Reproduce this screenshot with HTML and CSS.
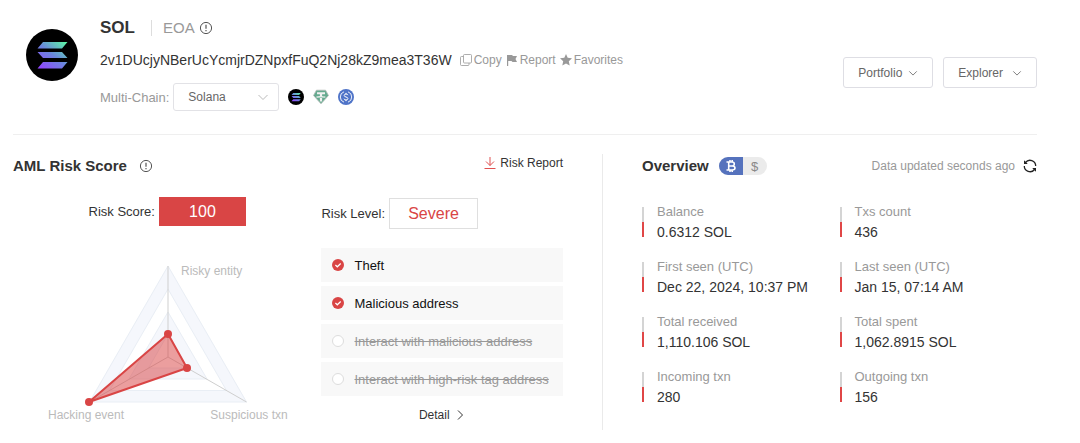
FILE: index.html
```html
<!DOCTYPE html>
<html lang="en">
<head>
<meta charset="utf-8">
<title>SOL address overview</title>
<link rel="stylesheet" href="styles.css">
</head>
<body>
<svg class="defs" aria-hidden="true">
  <defs>
    <linearGradient id="sol-gradient" gradientUnits="userSpaceOnUse" x1="16" y1="40" x2="38" y2="12">
      <stop offset="0" stop-color="#9147ff"/>
      <stop offset="0.5" stop-color="#6a86dc"/>
      <stop offset="1" stop-color="#5cf3a6"/>
    </linearGradient>
    <symbol id="solana" viewBox="0 0 52 52">
      <circle cx="26" cy="26" r="26" fill="#000"/>
      <path fill="url(#sol-gradient)" d="M17 13H41.500L36 19.500H11.500ZM11.500 23H36L41.500 29H17ZM17 33H41.500L36 39.500H11.500Z"/>
    </symbol>
    <symbol id="info" viewBox="0 0 14 14">
      <circle cx="7" cy="7" r="5.600" fill="none" stroke="currentColor"/>
      <path d="M7 3.800V7.800M7 9.100V10.200" fill="none" stroke="currentColor" stroke-width="1.200"/>
    </symbol>
    <symbol id="chevron" viewBox="0 0 12 12">
      <path d="M1.500 4L6 8.500L10.500 4" fill="none" stroke="currentColor"/>
    </symbol>
    <symbol id="checked" viewBox="0 0 12 12">
      <circle cx="6" cy="6" r="6" fill="#d94545"/>
      <path d="M3.400 6L5.300 7.800L8.700 4.500" fill="none" stroke="#fff" stroke-width="1.200"/>
    </symbol>
  </defs>
</svg>
<main class="page">
  <header class="account">
    <svg class="account-logo" role="img" aria-label="Solana"><use href="#solana"/></svg>
    <div class="account-info">
      <div class="title-row">
        <h1 class="title">SOL</h1>
        <span class="account-type">EOA</span>
        <svg class="icon info"><use href="#info"/></svg>
      </div>
      <div class="address-row">
        <span class="address">2v1DUcjyNBerUcYcmjrDZNpxfFuQ2Nj28kZ9mea3T36W</span>
        <button class="action" type="button">
          <svg class="icon-small" viewBox="0 0 12 12" fill="none" stroke="currentColor" stroke-width=".8"><rect x="3.500" y="0.500" width="8" height="8.500" rx="1"/><path d="M3.500 2.500H1.500Q.5 2.500 .5 3.500V10.500Q.5 11.500 1.500 11.500H8Q9 11.500 9 10.500V9"/></svg>Copy</button>
        <button class="action" type="button">
          <svg class="icon-small" viewBox="0 0 12 12" fill="currentColor"><path d="M1 1H6L7 2H11L9.500 5L11 8H6.500L5.500 7H2.200V12H1Z"/></svg>Report</button>
        <button class="action" type="button">
          <svg class="icon-small" viewBox="0 0 12 12" fill="currentColor"><path d="M6 0L7.700 3.800L12 4.300L8.800 7.200L9.700 11.500L6 9.400L2.300 11.500L3.200 7.200L0 4.300L4.300 3.800Z"/></svg>Favorites</button>
      </div>
      <div class="chain-row">
        <label for="chain">Multi-Chain:</label>
        <span class="select-box">
          <select id="chain"><option>Solana</option></select>
          <svg class="icon-small select-arrow"><use href="#chevron"/></svg>
        </span>
        <span class="coins">
          <svg class="coin" viewBox="0 0 52 52"><use href="#solana"/></svg>
          <svg class="coin" viewBox="0 0 16 16"><path d="M3.400 1.200H12.600L15.500 6.500L8 14.800L.5 6.500Z" fill="#65aa8f" stroke="#b5bdb9" stroke-width=".8"/><path d="M4 3.200H12V5.300H9.100V7C11 7.100 12.800 7.500 12.800 8S11 9 9.100 9.100V12.500H6.900V9.100C5 9 3.200 8.600 3.200 8S5 7.100 6.900 7V5.300H4Z" fill="#f1f1f1"/><path d="M4.500 8Q8 9 11.500 8" fill="none" stroke="#65aa8f" stroke-width=".6"/></svg>
          <svg class="coin" viewBox="0 0 16 16" fill="none" stroke="#fff"><circle cx="8" cy="8" r="8" fill="#4f74c8" stroke="none"/><path d="M6 2.800A5.500 5.500 0 0 0 6 13.200M10 2.800A5.500 5.500 0 0 1 10 13.200" stroke-width=".9"/><path d="M9.900 6.200Q9.600 5 8 5T6.200 6.500Q6.200 7.600 8 8T9.900 9.500Q9.800 11 8 11T6.100 9.700M8 3.900V5M8 11V12.100" stroke-width="1"/></svg>
        </span>
      </div>
    </div>
    <div class="menus">
      <button class="menu" type="button">Portfolio<svg class="menu-arrow"><use href="#chevron"/></svg></button>
      <button class="menu menu-wide" type="button">Explorer<svg class="menu-arrow"><use href="#chevron"/></svg></button>
    </div>
  </header>

  <div class="panels">
    <section class="risk">
      <div class="risk-score">
        <div class="panel-head">
          <h2 class="heading">AML Risk Score</h2>
          <svg class="icon info"><use href="#info"/></svg>
        </div>
        <p class="score-line">Risk Score:<strong class="score">100</strong></p>
        <svg class="radar" viewBox="0 0 280 170" role="img" aria-label="Risk radar chart">
          <g stroke="#e9eef5" stroke-width="1">
            <path fill="#f5f7fc" d="M138 6L216.500 142H59.500Z"/>
            <path fill="#fff" d="M138 29L196.500 130.500H79.500Z"/>
            <path fill="#f5f7fc" d="M138 52L177 119H99Z"/>
            <path fill="#fff" d="M138 74L157.500 108H118.500Z"/>
          </g>
          <path fill="none" stroke="#cfcfcf" d="M138 97V6M138 97L216.500 142M138 97L59.500 142"/>
          <path fill="#d94545" fill-opacity=".52" stroke="#d94545" stroke-width="2" stroke-linejoin="round" d="M138 74L157 108L59 142Z"/>
          <g fill="#d94545"><circle cx="138" cy="74" r="4"/><circle cx="157" cy="108" r="4"/><circle cx="59" cy="142" r="4"/></g>
          <g class="radar-label"><text x="151" y="15">Risky entity</text><text x="56" y="159" text-anchor="middle">Hacking event</text><text x="219" y="159" text-anchor="middle">Suspicious txn</text></g>
        </svg>
      </div>
      <div class="risk-level">
        <a class="report-link" href="#report">
          <svg class="icon-small report-icon" viewBox="0 0 12 12" fill="none" stroke="currentColor"><path d="M6 0V8.500M2 4.500L6 8.500L10 4.500M.5 11.500H11.500"/></svg>Risk Report</a>
        <p class="level-line">Risk Level:<strong class="level">Severe</strong></p>
        <ul class="checks">
          <li class="check"><svg class="icon-small"><use href="#checked"/></svg>Theft</li>
          <li class="check"><svg class="icon-small"><use href="#checked"/></svg>Malicious address</li>
          <li class="check check-off"><span class="ring"></span><s>Interact with malicious address</s></li>
          <li class="check check-off"><span class="ring"></span><s>Interact with high-risk tag address</s></li>
        </ul>
        <a class="detail" href="#detail">Detail<svg class="icon-small detail-arrow"><use href="#chevron"/></svg></a>
      </div>
    </section>

    <section class="overview">
      <div class="overview-head">
        <h2 class="heading">Overview</h2>
        <div class="currency">
          <button class="unit unit-on" type="button" aria-label="Show in coins"><svg class="icon-small" viewBox="0 0 12 12" fill="none" stroke="currentColor" stroke-width="1.600"><path d="M1.500 2H7Q9.300 2 9.300 4T7 6H3.500M7 6Q10 6 10 8T7 10H1.500M3.700 2V10M5 0V2M7.200 0V2M5 10V12M7.200 10V12"/></svg></button>
          <button class="unit" type="button">$</button>
        </div>
        <span class="updated">Data updated seconds ago</span>
        <button class="refresh" type="button" aria-label="Refresh">
          <svg class="icon" viewBox="0 0 14 14" fill="none" stroke="currentColor" stroke-width="1.300"><path d="M2.500 3.500A5.700 5.700 0 0 1 12.700 7M11.500 10.500A5.700 5.700 0 0 1 1.300 7"/><path fill="currentColor" stroke="none" d="M1 1.300V5H4.800ZM13 12.700V9H9.200Z"/></svg>
        </button>
      </div>
      <dl class="stats">
        <div class="stat"><dt>Balance</dt><dd>0.6312 SOL</dd></div>
        <div class="stat"><dt>Txs count</dt><dd>436</dd></div>
        <div class="stat"><dt>First seen (UTC)</dt><dd>Dec 22, 2024, 10:37 PM</dd></div>
        <div class="stat"><dt>Last seen (UTC)</dt><dd>Jan 15, 07:14 AM</dd></div>
        <div class="stat"><dt>Total received</dt><dd>1,110.106 SOL</dd></div>
        <div class="stat"><dt>Total spent</dt><dd>1,062.8915 SOL</dd></div>
        <div class="stat"><dt>Incoming txn</dt><dd>280</dd></div>
        <div class="stat"><dt>Outgoing txn</dt><dd>156</dd></div>
      </dl>
    </section>
  </div>
</main>
</body>
</html>
```
FILE: styles.css
```css
* { box-sizing: border-box; }
body { margin: 0; background: #fff; color: #333; font-family: "Liberation Sans", Arial, sans-serif; font-size: 13px; }
h1, h2, p, ul, dl, dd { margin: 0; padding: 0; }
button, select { font: inherit; color: inherit; }
button { border: 0; padding: 0; background: none; cursor: pointer; }
a { color: inherit; text-decoration: none; }
svg { flex: none; }
.defs { position: absolute; width: 0; height: 0; }
.page { padding: 16px 43px 12px 13px; }
.icon { width: 14px; height: 14px; }
.icon-small { width: 12px; height: 12px; }
.info { color: #555; }

.account { display: flex; align-items: flex-start; padding: 0 0 23px 13px; border-bottom: 1px solid #efefef; }
.account-logo { width: 52px; height: 52px; margin: 13px 22px 0 0; }
.title-row { display: flex; align-items: center; height: 24px; }
.title { font-size: 17px; line-height: 24px; }
.account-type { margin: 0 4px 0 16px; padding-left: 11px; border-left: 1px solid #ddd; color: #999; font-size: 15px; line-height: 16px; }
.address-row { display: flex; align-items: center; height: 24px; margin-top: 8px; }
.address { margin-right: 8px; font-size: 14px; }
.action { display: flex; align-items: center; gap: 2px; margin-right: 4px; color: #999; font-size: 12px; }
.chain-row { display: flex; align-items: center; height: 28px; margin-top: 11px; color: #999; }
.select-box { display: inline-flex; position: relative; margin-left: 4px; }
.select-box select { width: 106px; height: 28px; padding: 0 14px; border: 1px solid #e2e2e6; border-radius: 3px; background: #fff; color: #666; appearance: none; font-size: 12px; }
.select-arrow { position: absolute; top: 8px; right: 10px; color: #bbb; pointer-events: none; }
.coins { display: flex; gap: 9px; margin-left: 9px; }
.coin { width: 16px; height: 16px; }
.menus { display: flex; gap: 10px; margin: 41px 0 0 auto; }
.menu { display: flex; align-items: center; gap: 6px; height: 31px; padding: 0 14px; border: 1px solid #dedee4; border-radius: 3px; color: #666; font-size: 12px; }
.menu-wide { gap: 9px; }
.menu-arrow { width: 10px; height: 10px; }

.panels { display: grid; grid-template-columns: 590fr 434fr; padding-top: 19px; }
.risk { display: grid; grid-template-columns: 309fr 281fr; border-right: 1px solid #eaeaea; }
.heading { font-size: 15px; line-height: 24px; }
.panel-head { display: flex; align-items: center; gap: 12px; }
.score-line { display: flex; align-items: center; justify-content: center; gap: 4px; height: 30px; margin-top: 18px; }
.score { width: 87px; background: #d94545; color: #fff; font-size: 16px; font-weight: 400; line-height: 29px; text-align: center; }
.radar { display: block; width: 280px; margin: 34px 0 0 17px; overflow: visible; }
.radar-label { fill: #bbb; font-size: 12px; }
.risk-level { display: flex; flex-direction: column; padding-right: 39px; }
.report-link { display: flex; align-items: center; gap: 4px; align-self: flex-end; height: 18px; font-size: 12px; }
.report-icon { color: #e05050; }
.level-line { display: flex; align-items: center; gap: 4px; margin-top: 26px; }
.level { width: 89px; border: 1px solid #dfdfdf; color: #d94545; font-size: 16px; font-weight: 400; line-height: 29px; text-align: center; }
.checks { display: grid; gap: 4px; margin-top: 19px; list-style: none; }
.check { display: flex; align-items: center; gap: 10px; height: 34px; padding-left: 11px; background: #f8f8f8; color: #111; font-size: 13px; }
.check-off { color: #999; }
.ring { width: 12px; height: 12px; border: 1px solid #ddd; border-radius: 50%; background: #fff; }
.detail { display: flex; align-items: center; gap: 4px; align-self: center; height: 20px; margin-top: 9px; font-size: 12px; }
.detail-arrow { transform: rotate(-90deg); }

.overview { padding-left: 39px; }
.overview-head { display: flex; align-items: center; height: 24px; }
.currency { display: flex; margin-left: 10px; overflow: hidden; border-radius: 9px; background: #ebebeb; }
.unit { display: flex; align-items: center; justify-content: center; width: 24px; height: 18px; color: #888; }
.unit-on { background: #5572bd; color: #fff; }
.updated { margin-left: auto; color: #999; font-size: 12px; }
.refresh { display: flex; margin-left: 8px; color: #222; }
.stats { display: grid; grid-template-columns: 1fr 1fr; gap: 15px 0; margin-top: 24px; }
.stat { display: grid; grid-template-rows: 20px 20px; position: relative; padding-left: 15px; }
.stat::before { content: ""; position: absolute; top: 5px; left: 0; width: 2px; height: 30px; background: linear-gradient(#d4d4d4 50%, #e04646 50%); }
.stat dt { color: #999; line-height: 20px; }
.stat dd { font-size: 14px; line-height: 20px; }
```
